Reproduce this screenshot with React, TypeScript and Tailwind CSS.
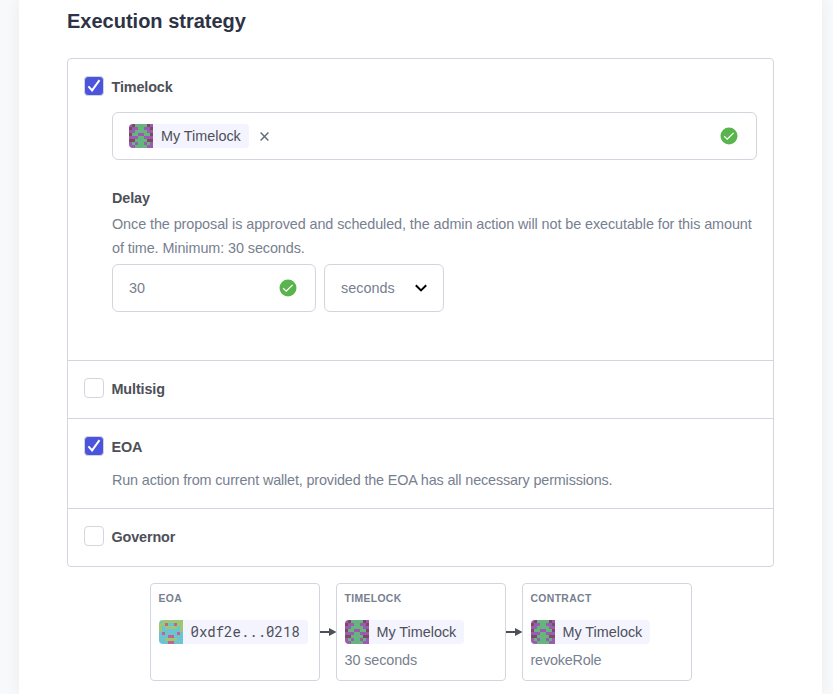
import React from "react";

const SANS = "font-['Liberation_Sans',Arial,sans-serif]";

const PURPLE = ["PDGGGGDP", "DPPGGPPD", "PPGGGGPP", "DGGPPGGD", "PPPGGPPP", "DDGGGGDD", "PGPGGPGP", "PPGGGGPP"];
const BLUE = ["BGGGGGGG", "GGPBBPGG", "GBGGGGBG", "GBBBBBBG", "BPBBBBPB", "BBBPPBBB", "BBGGGGBB", "BBBPPBBB"];
const PURPLE_COLORS: Record<string, string> = { P: "#9a5bb0", D: "#7c4a63", G: "#66b57f" };
const BLUE_COLORS: Record<string, string> = { B: "#6cc3d3", G: "#9cc873", P: "#c0658f" };

function Blockie({ rows, colors }: { rows: string[]; colors: Record<string, string> }) {
  return (
    <svg className="h-6 w-6 shrink-0" viewBox="0 0 8 8" shapeRendering="crispEdges">
      {rows.map((r, y) => r.split("").map((c, x) => <rect key={`${x}-${y}`} x={x} y={y} width="1" height="1" fill={colors[c]} />))}
    </svg>
  );
}

function Chip({ label, mono, tight }: { label: string; mono?: boolean; tight?: boolean }) {
  return (
    <div className="flex h-6 w-fit items-center overflow-hidden rounded bg-[#f4f4ff] pr-2">
      <Blockie rows={mono ? BLUE : PURPLE} colors={mono ? BLUE_COLORS : PURPLE_COLORS} />
      {mono ? (
        <span className="ml-[7.5px] w-[109px] font-['Roboto_Mono','Liberation_Mono',monospace] text-[14px] leading-6 whitespace-nowrap text-[#4e5058]">{label}</span>
      ) : (
        <span className={`${tight ? "ml-[7.5px] w-[79.5px]" : "ml-2 w-20"} pt-px text-[14.4px] leading-[23px] tracking-[-0.02px] whitespace-nowrap text-[#4e5058]`}>{label}</span>
      )}
    </div>
  );
}

function Check({ checked }: { checked?: boolean }) {
  return (
    <span className={`mb-px flex h-5 w-5 shrink-0 items-center justify-center rounded border border-[#d3d5de] ${checked ? "bg-[#4b54dc]" : "bg-white"}`}>
      {checked && (
        <svg className="h-[18px] w-[18px]" viewBox="0 0 18 18" fill="none" stroke="white" strokeWidth="2">
          <path d="M3.4 9.4 7.1 13.4 14.5 3.2" />
        </svg>
      )}
    </span>
  );
}

function Option({ label, checked }: { label: string; checked?: boolean }) {
  return (
    <div className="flex h-[23px] items-center">
      <Check checked={checked} />
      <span className="ml-[7.5px] text-[14.4px] leading-[22px] font-bold tracking-[-0.13px] text-[#4e5058]">{label}</span>
    </div>
  );
}

function Valid() {
  return (
    <svg className="h-[18px] w-[18px]" viewBox="0 0 18 18" fill="none">
      <circle cx="9" cy="9" r="8.5" fill="#5ab44d" />
      <path d="m4.2 9.2 3 3 6.4-6.3" stroke="white" strokeWidth="1.3" />
    </svg>
  );
}

function Arrow() {
  return (
    <svg className="h-3 w-4 shrink-0 overflow-visible" viewBox="0 0 16 12">
      <path d="M0 6h10" stroke="#4e5058" strokeWidth="2" />
      <path d="M9 2v8l7.5-4z" fill="#4e5058" />
    </svg>
  );
}

function Step({ title, children }: { title: string; children: React.ReactNode }) {
  return (
    <div className="h-[98px] w-[170px] rounded border border-[#d3d5de] px-2 pt-2">
      <div className="-ml-[0.5px] h-[14px] text-[10.4px] leading-[14px] font-bold tracking-[0.35px] text-[#77808f]">{title}</div>
      <div className="mt-[14px]">{children}</div>
    </div>
  );
}

export default function App() {
  return (
    <div className={`flex h-[694px] w-[833px] overflow-hidden bg-[#f7f9fa] pl-[19px] ${SANS}`}>
      <main className="h-[694px] w-[803px] bg-white px-12 pt-[9px] shadow-[0_0_16px_rgba(0,0,0,0.06)]">
        <h1 className="h-6 text-[20px] leading-6 font-bold text-[#2d3345]">Execution strategy</h1>
        <section className="mt-[25px] h-[509px] w-[707px] rounded border border-[#d3d5de]">
          <div className="h-[302px] border-b border-[#d3d5de] px-4 pt-4">
            <Option label="Timelock" checked />
            <div className="ml-7 pt-[14px]">
              <div className="flex h-12 w-[645px] items-center rounded-md border border-[#d3d5de] px-4">
                <Chip label="My Timelock" />
                <svg className="ml-[11px] h-[9px] w-[9px]" viewBox="0 0 9 9" stroke="#626a78" strokeWidth="1.4"><path d="m.6.6 7.8 7.8m0-7.8L.6 8.4" /></svg>
                <div className="mr-[2px] ml-auto"><Valid /></div>
              </div>
              <div className="mt-[26px] h-6 text-[14.4px] leading-6 font-bold tracking-[-0.1px] text-[#4e5058]">Delay</div>
              <p className="mt-[2px] text-[14.4px] leading-6 tracking-[-0.083px] whitespace-nowrap text-[#77808f]">Once the proposal is approved and scheduled, the admin action will not be executable for this amount<br />of time. Minimum: 30 seconds.</p>
              <div className="mt-1 flex gap-2 text-[14.4px] text-[#77808f]">
                <div className="flex h-12 w-[204px] items-center justify-between rounded-md border border-[#d3d5de] pr-[18px] pl-4"><span className="pt-[2px]">30</span><Valid /></div>
                <div className="flex h-12 w-[120px] items-center justify-between rounded-md border border-[#d3d5de] px-4"><span className="pt-[2px]">seconds</span>
                  <svg className="h-3 w-3" viewBox="0 0 12 12" fill="none" stroke="black" strokeWidth="2"><path d="m.8 3.2 5.2 5.2 5.2-5.2" /></svg>
                </div>
              </div>
            </div>
          </div>
          <div className="h-[58px] border-b border-[#d3d5de] px-4 pt-4"><Option label="Multisig" /></div>
          <div className="h-[90px] border-b border-[#d3d5de] px-4 pt-4">
            <Option label="EOA" checked />
            <p className="mt-[10px] ml-7 text-[14.4px] leading-6 tracking-[-0.145px] whitespace-nowrap text-[#77808f]">Run action from current wallet, provided the EOA has all necessary permissions.</p>
          </div>
          <div className="px-4 pt-4"><Option label="Governor" /></div>
        </section>
        <div className="mt-4 ml-[83px] flex items-center">
          <Step title="EOA"><Chip label="0xdf2e...0218" mono /></Step>
          <Arrow />
          <Step title="TIMELOCK"><Chip label="My Timelock" tight /><div className="mt-1 -ml-[0.5px] text-[14.4px] leading-6 tracking-[-0.1px] text-[#77808f]">30 seconds</div></Step>
          <Arrow />
          <Step title="CONTRACT"><Chip label="My Timelock" tight /><div className="mt-1 -ml-[0.5px] text-[14.4px] leading-6 tracking-[-0.2px] text-[#77808f]">revokeRole</div></Step>
        </div>
      </main>
    </div>
  );
}
